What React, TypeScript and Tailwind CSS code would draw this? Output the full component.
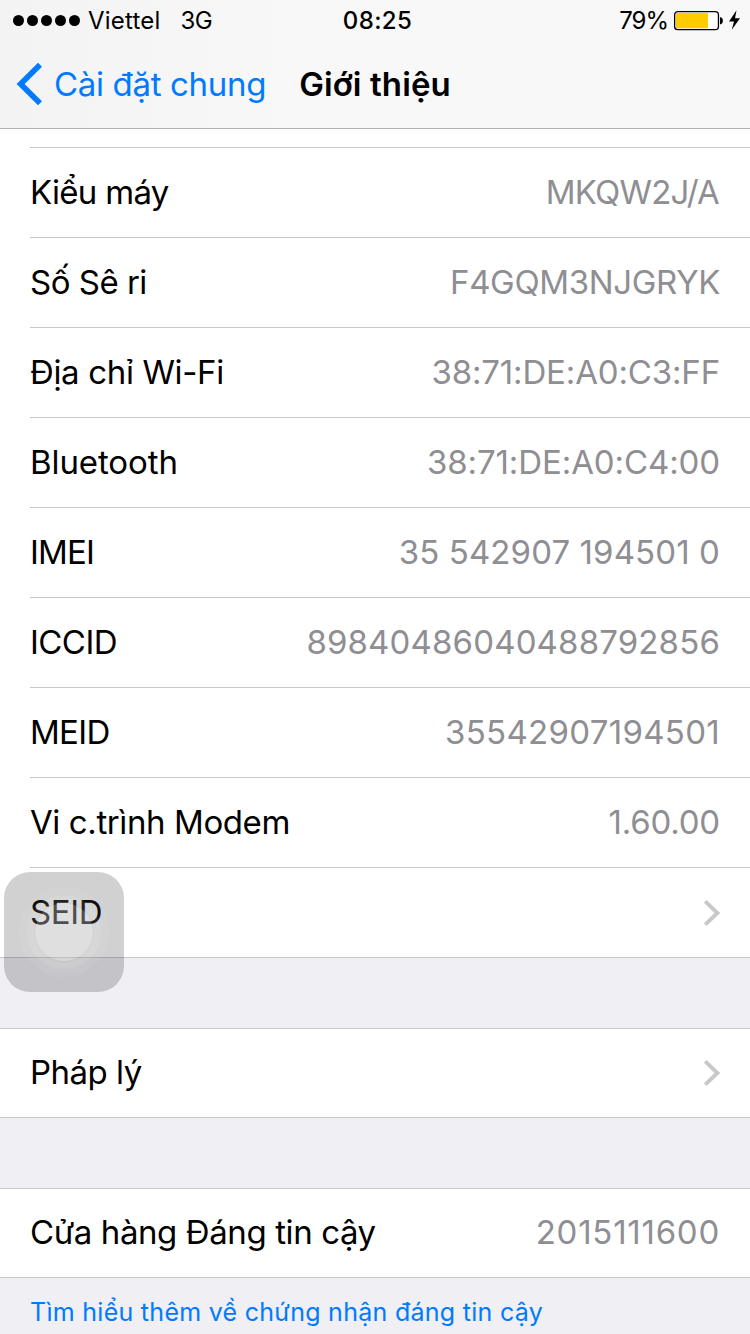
type Item = { label: string; value?: string; labelClass: string; valueClass?: string };

const ITEMS: Item[] = [
  { label: 'Kiểu máy', value: 'MKQW2J/A', labelClass: 'tracking-[-0.7px]', valueClass: 'mr-px tracking-[-0.8px]' },
  { label: 'Số Sê ri', value: 'F4GQM3NJGRYK', labelClass: 'tracking-[-0.5px]', valueClass: 'tracking-[-0.35px]' },
  { label: 'Địa chỉ Wi-Fi', value: '38:71:DE:A0:C3:FF', labelClass: 'tracking-[-0.35px]', valueClass: 'tracking-[-0.15px]' },
  { label: 'Bluetooth', value: '38:71:DE:A0:C4:00', labelClass: 'tracking-[-0.1px]', valueClass: 'tracking-[-0.1px]' },
  { label: 'IMEI', value: '35 542907 194501 0', labelClass: 'tracking-[-0.8px]', valueClass: 'tracking-[0.1px]' },
  { label: 'ICCID', value: '89840486040488792856', labelClass: 'tracking-[-0.55px]', valueClass: 'tracking-[0.15px]' },
  { label: 'MEID', value: '35542907194501', labelClass: 'tracking-[-0.7px]', valueClass: 'tracking-[0.3px]' },
  { label: 'Vi c.trình Modem', value: '1.60.00', labelClass: 'tracking-[-0.4px]', valueClass: 'tracking-[-0.2px]' },
  { label: 'SEID', labelClass: 'tracking-[-0.4px]' },
];

function Chevron() {
  return (
    <svg className="h-[28px] w-[18px] shrink-0" viewBox="0 0 18 28" fill="none">
      <path d="M3.2 2.4 L15.4 14 L3.2 25.6" stroke="#c7c7cc" strokeWidth="3.8" />
    </svg>
  );
}

function Row({ item }: { item: Item }) {
  return (
    <div className="flex h-full items-center justify-between pr-[30px] text-[33px] leading-none whitespace-nowrap">
      <span className={item.labelClass}>{item.label}</span>
      {item.value ? (
        <span className={'text-[#8e8e93] ' + item.valueClass}>{item.value}</span>
      ) : (
        <Chevron />
      )}
    </div>
  );
}

function StatusBar() {
  return (
    <div className="grid h-[41px] grid-cols-3 items-center pr-[8px] pl-[13px] text-[24px] leading-none whitespace-nowrap">
      <div className="flex items-center">
        <div className="flex gap-[3px]">
          {[0, 1, 2, 3, 4].map((i) => (
            <span key={i} className="size-[11px] rounded-full bg-black" />
          ))}
        </div>
        <span className="ml-[8px] tracking-[0.2px]">Viettel</span>
        <span className="ml-[20px] tracking-[-0.6px]">3G</span>
      </div>
      <span className="text-center font-medium tracking-[0.4px]">08:25</span>
      <div className="flex items-center justify-end">
        <span className="tracking-[-1px]">79%</span>
        <svg className="ml-[6px] h-[22px] w-[68px]" viewBox="0 0 68 22">
          <rect x="0.65" y="1.6" width="43.8" height="18" rx="3.2" fill="#fff" stroke="#000" strokeWidth="1.3" />
          <rect x="2" y="3" width="32" height="15.2" rx="1" fill="#ffcc00" />
          <path d="M46 7.2 h1 q1.9 .6 1.9 3.5 t-1.9 3.5 h-1 z" fill="#000" />
          <path d="M62.5 .2 L55 11.4 H60 L57.8 19.8 L66 8.2 H61 Z" fill="#000" />
        </svg>
      </div>
    </div>
  );
}

export default function App() {
  return (
    <div className="relative flex h-[1334px] w-[750px] flex-col overflow-hidden bg-[#efeff4] font-['Inter','Noto_Sans',sans-serif] text-black">
      <header className="h-[129px] shrink-0 border-b border-[#b2b2b2] bg-gradient-to-r from-[#f3f3f3] to-[#f8f8f8] to-40%">
        <StatusBar />
        <div className="grid h-[87px] grid-cols-[1fr_auto_1fr] items-center text-[33px] leading-none whitespace-nowrap">
          <div className="flex items-center pl-[16px] text-[#007aff]">
            <svg className="mt-[-1px] h-[44px] w-[28px]" viewBox="0 0 28 44" fill="none">
              <path d="M24 2.8 L4.6 22 L24 41.2" stroke="#007aff" strokeWidth="5.6" />
            </svg>
            <span className="ml-[10px] tracking-[-0.33px]">Cài đặt chung</span>
          </div>
          <h1 className="font-semibold tracking-[0.1px]">Giới thiệu</h1>
        </div>
      </header>
      <main>
        <section className="border-b border-[#c8c7cc] bg-white pl-[30px]">
          <div className="h-[18px]" />
          {ITEMS.map((item) => (
            <div key={item.label} className="h-[90px] border-t border-[#c8c7cc]">
              <Row item={item} />
            </div>
          ))}
        </section>
        <section className="mt-[70px] h-[90px] border-y border-[#c8c7cc] bg-white pb-px pl-[30px]">
          <Row item={{ label: 'Pháp lý', labelClass: 'tracking-[-0.5px]' }} />
        </section>
        <section className="mt-[70px] h-[90px] border-y border-[#c8c7cc] bg-white pb-px pl-[30px]">
          <Row
            item={{
              label: 'Cửa hàng Đáng tin cậy',
              value: '2015111600',
              labelClass: 'tracking-[-0.4px]',
              valueClass: 'tracking-[0.75px]',
            }}
          />
        </section>
        <a className="block pt-[20px] pl-[30px] text-[25px] leading-[28px] tracking-[0.28px] whitespace-nowrap text-[#007aff]">
          Tìm hiểu thêm về chứng nhận đáng tin cậy
        </a>
      </main>
      <div className="absolute top-[872px] left-[4px] flex size-[120px] items-center justify-center rounded-[26px] bg-black/[0.18]">
        <div className="flex size-[90px] items-center justify-center rounded-full bg-white/[0.05]">
          <div className="flex size-[74px] items-center justify-center rounded-full bg-white/[0.09]">
            <div className="size-[58px] rounded-full bg-white/20 shadow-[0_0_2px_rgba(0,0,0,0.08)]" />
          </div>
        </div>
      </div>
    </div>
  );
}
